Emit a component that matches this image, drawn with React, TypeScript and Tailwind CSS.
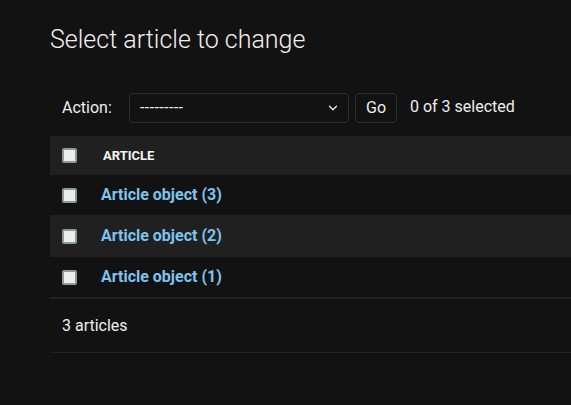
import { ChevronDown } from "lucide-react";

const rows = [3, 2, 1];

function Box() {
  return (
    <span className="block w-[15px] h-[15px] rounded-[2px] border-2 border-[#8b98a0] bg-[#e9eeec]" />
  );
}

export default function App() {
  return (
    <div
      className="min-h-[405px] bg-[#121212] text-[#eeeeee] pl-[50px] pt-[25px] overflow-hidden"
      style={{ fontFamily: "Roboto, 'Liberation Sans', sans-serif" }}
    >
      <h1 className="text-[25px] leading-[30px] font-light text-[#f0f0f0]">Select article to change</h1>

      <div className="mt-[38px] flex items-center h-[30px] pl-[12px] text-[16px]">
        <span className="w-[67px]">Action:</span>
        <div className="flex items-center justify-between w-[220px] h-[30px] rounded-[4px] border border-[#2e2e2e] pl-[10px] pr-[8px]">
          <span className="text-[16px] tracking-[0.4px]">---------</span>
          <ChevronDown size={14} strokeWidth={2.2} />
        </div>
        <button className="ml-[6px] w-[42px] h-[30px] rounded-[4px] border border-[#2e2e2e] text-[16px]">Go</button>
        <span className="ml-[13px] -mt-[2px]">0 of 3 selected</span>
      </div>

      <div className="mt-[13px]">
        <div className="flex items-center h-[39px] bg-[#202020] pl-[12px]">
          <Box />
          <span className="ml-[26px] text-[13px] font-bold text-[#f5f5f5]">ARTICLE</span>
        </div>
        {rows.map((n, i) => (
          <div
            key={n}
            className={`flex items-center pl-[12px] ${i === 1 ? "h-[42px] bg-[#202020]" : "h-[40px]"}`}
          >
            <Box />
            <span className="ml-[24px] text-[16px] font-bold text-[#7cc4f0]">Article object ({n})</span>
          </div>
        ))}
        <div className="h-[2px] bg-[#222222]" />
        <div className="flex items-center h-[54px] pl-[12px] text-[16px] border-b border-[#222222]">
          3 articles
        </div>
      </div>
    </div>
  );
}
